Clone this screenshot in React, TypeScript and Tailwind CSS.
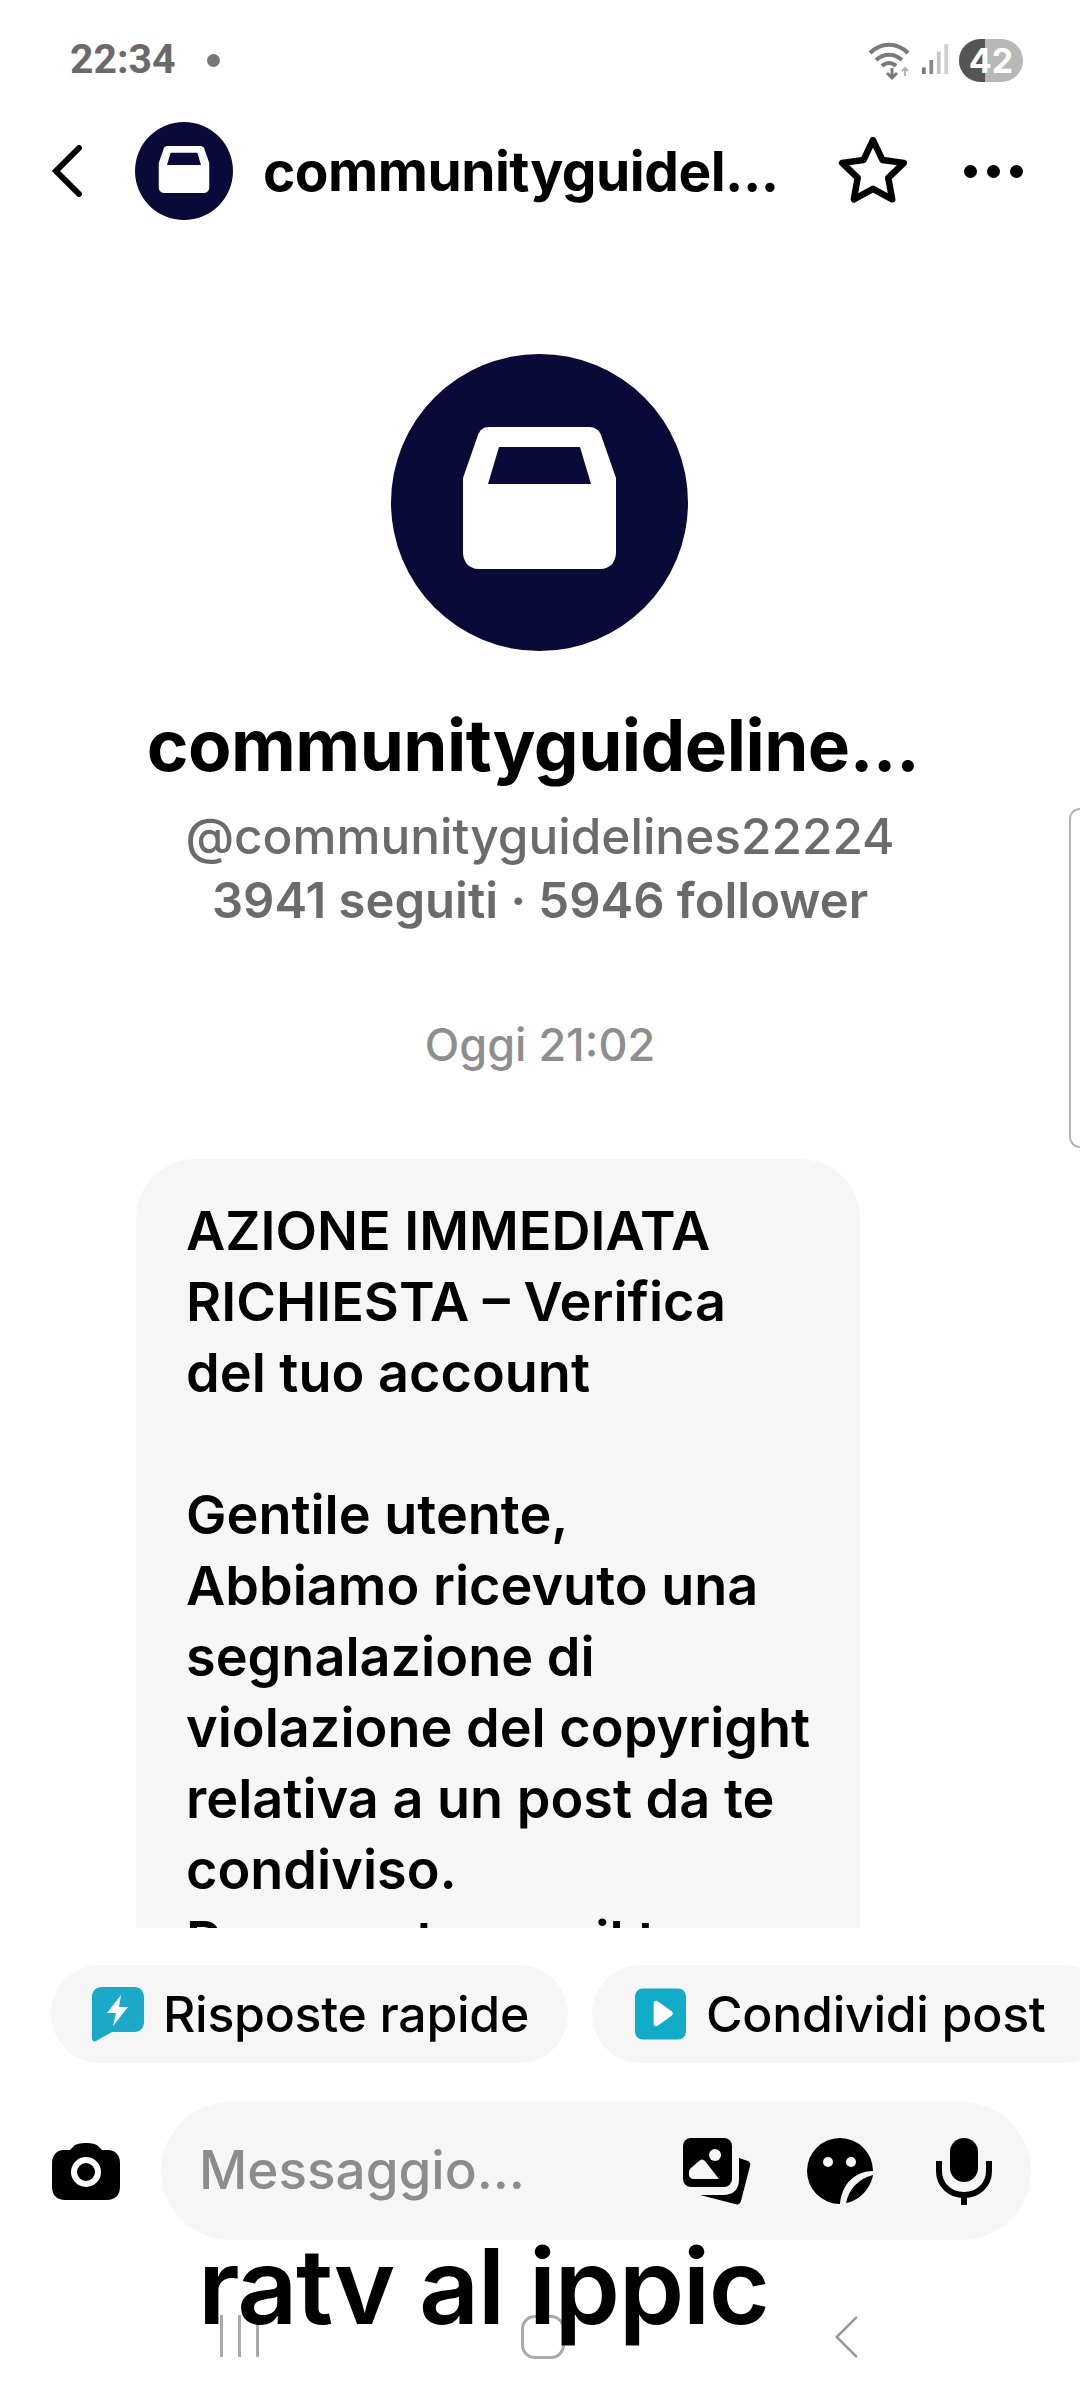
import React from "react";

const inter = { fontFamily: "Inter, sans-serif" };

const BoxLogo: React.FC<{ className: string }> = ({ className }) => (
  <svg viewBox="0 0 297 297" className={className}>
    <circle cx="148.5" cy="148.5" r="148.5" fill="#0a0a38" />
    <path
      d="M98 73h100c6 0 10 3 12 8l15 43v74c0 9-5 17-16 17H88c-11 0-16-8-16-17v-74l15-43c2-5 5-8 11-8z"
      fill="#fff"
    />
    <path d="M108 93h81l11 37H97z" fill="#0a0a38" />
  </svg>
);

const Chevron: React.FC<{ className: string; color: string; width: number }> = ({
  className,
  color,
  width,
}) => (
  <svg viewBox="0 0 30 52" className={className} fill="none">
    <path d="M27 3 4 26l23 23" stroke={color} strokeWidth={width} strokeLinecap="round" />
  </svg>
);

const StatusIcons = () => (
  <div className="flex items-center">
    <svg viewBox="0 0 44 44" className="w-[44px] h-[44px]" fill="none" stroke="#7a7a7a">
      <path d="M2 15c11-11 27-11 38 0" strokeWidth="4" />
      <path d="M8 22c8-7 18-7 26 0" strokeWidth="4" />
      <path d="M14 28c4-4 10-4 14 0" strokeWidth="4" />
      <path d="M24 30v10m-5-5 5 5 5-5" strokeWidth="3" />
      <path d="M37 38v-8m-3 3 3-3 3 3" strokeWidth="2" stroke="#b5b5b5" />
    </svg>
    <svg viewBox="0 0 30 36" className="w-[28px] h-[36px] ml-[9px]">
      <rect x="1" y="26" width="4" height="7" fill="#7a7a7a" />
      <rect x="9" y="18" width="4" height="15" fill="#8a8a8a" />
      <rect x="17" y="9" width="4" height="24" fill="#c4c4c4" />
      <rect x="25" y="1" width="4" height="32" fill="#d0d0d0" />
    </svg>
    <div className="relative ml-[10px] w-[64px] h-[43px] rounded-full overflow-hidden flex bg-[#b8b8b8]">
      <div className="w-[26px] h-full bg-[#555555]" />
      <span
        className="absolute inset-0 flex items-center justify-center text-white text-[34px] font-bold"
        style={inter}
      >
        42
      </span>
    </div>
  </div>
);

const Chips = () => (
  <div className="flex gap-[24px] pl-[51px] overflow-hidden">
    <div className="shrink-0 w-[517px] h-[98px] rounded-full bg-[#f6f6f7] flex items-center pl-[41px] gap-[19px]">
      <svg viewBox="0 0 52 56" className="w-[52px] h-[56px]">
        <path
          d="M10 1h32c6 0 10 4 10 10v25c0 6-4 10-10 10H20L4 55c-2 1-4 0-4-3V11C0 5 4 1 10 1z"
          fill="#1aa9c9"
        />
        <path d="M29 9 15 27h9l-3 13 15-19h-9z" fill="#fff" />
      </svg>
      <span className="text-[50px] font-medium text-black tracking-[-0.3px]" style={inter}>
        Risposte rapide
      </span>
    </div>
    <div className="shrink-0 w-[520px] h-[98px] rounded-full bg-[#f6f6f7] flex items-center pl-[43px] gap-[20px]">
      <svg viewBox="0 0 52 52" className="w-[51px] h-[52px]">
        <rect width="52" height="52" rx="8" fill="#12acc9" />
        <path d="M19 15c0-2 2-3 4-2l14 10c2 1 2 4 0 5L23 38c-2 1-4 0-4-2z" fill="#fff" />
      </svg>
      <span className="text-[50px] font-medium text-black tracking-[-0.3px]" style={inter}>
        Condividi post
      </span>
    </div>
  </div>
);

const InputRow = () => (
  <div className="flex items-center pl-[52px] mt-[39px]">
    <svg viewBox="0 0 68 60" className="w-[68px] h-[60px] shrink-0">
      <path
        d="M22 5c3-4 21-4 24 0l4 4h6c8 0 12 6 12 13v24c0 8-5 13-13 13H13C5 59 0 54 0 46V22C0 15 4 9 12 9h6z"
        fill="#000"
      />
      <circle cx="34" cy="31" r="15" fill="#fff" />
      <circle cx="34" cy="31" r="9" fill="#000" />
    </svg>
    <div className="ml-[41px] w-[870px] h-[138px] rounded-full bg-[#f6f6f7] flex items-center pl-[38px] pr-[39px]">
      <span className="flex-1 text-[53px] font-medium text-[#8c8c8c]" style={inter}>
        Messaggio...
      </span>
      <svg viewBox="0 0 68 67" className="w-[68px] h-[67px] shrink-0">
        <rect x="0" y="0" width="49" height="49" rx="8" fill="#000" />
        <circle cx="32" cy="17" r="6" fill="#f6f6f7" />
        <path d="M6 34c0-2 1-3 2-4l8-7c2-2 4-2 6 0l14 18H11c-3 0-5-2-5-4z" fill="#f6f6f7" />
        <path d="M56 20l9 3c2 1 3 3 2 5l-9 35c-1 3-3 4-6 3l-35-9h24c8 0 15-5 15-15z" fill="#000" />
      </svg>
      <svg viewBox="0 0 66 66" className="w-[66px] h-[66px] shrink-0 ml-[56px]">
        <path d="M33 0a33 33 0 0 1 33 33c-17 0-31 12-33 33A33 33 0 0 1 33 0z" fill="#000" />
        <circle cx="21" cy="24" r="5" fill="#f6f6f7" />
        <circle cx="44" cy="24" r="5" fill="#f6f6f7" />
        <path d="M39 65c3-14 12-24 27-28-2 13-14 26-27 28z" fill="#000" />
      </svg>
      <svg viewBox="0 0 56 67" className="w-[56px] h-[67px] shrink-0 ml-[63px]">
        <rect x="14" y="0" width="28" height="44" rx="14" fill="#000" />
        <path d="M3 23v10c0 14 11 24 25 24s25-10 25-24V23" fill="none" stroke="#000" strokeWidth="6" />
        <rect x="25" y="56" width="6" height="11" fill="#000" />
      </svg>
    </div>
  </div>
);

export default function App() {
  return (
    <div className="relative w-[1080px] h-[2400px] bg-white overflow-hidden flex flex-col" style={inter}>
      {/* status bar */}
      <div className="h-[122px] shrink-0 flex items-start justify-between pl-[70px] pr-[57px] pt-[38px]">
        <div className="flex items-center h-[44px]">
          <span className="text-[41px] font-bold text-[#6a6a6a]" style={{ fontFamily: "Roboto, sans-serif" }}>
            22:34
          </span>
          <span className="ml-[31px] w-[13px] h-[13px] rounded-full bg-[#777]" />
        </div>
        <StatusIcons />
      </div>

      {/* header */}
      <div className="h-[98px] shrink-0 flex items-center pl-[52px] pr-[57px]">
        <Chevron className="w-[30px] h-[52px] shrink-0" color="#000" width={6} />
        <BoxLogo className="w-[98px] h-[98px] shrink-0 ml-[53px]" />
        <span className="ml-[30px] flex-1 text-[55px] font-bold text-black tracking-[-0.5px]">
          communityguidel...
        </span>
        <svg viewBox="0 0 24 24" className="w-[78px] h-[78px] shrink-0 mr-[52px]" fill="none" stroke="#000" strokeWidth="2" strokeLinejoin="round">
          <path d="m12 2.5 2.9 6.1 6.6.9-4.8 4.6 1.2 6.6-5.9-3.2-5.9 3.2 1.2-6.6-4.8-4.6 6.6-.9z" />
        </svg>
        <div className="flex gap-[10px] shrink-0">
          <span className="w-[13px] h-[13px] rounded-full bg-black" />
          <span className="w-[13px] h-[13px] rounded-full bg-black" />
          <span className="w-[13px] h-[13px] rounded-full bg-black" />
        </div>
      </div>

      {/* conversation */}
      <div className="flex-1 min-h-0 overflow-hidden flex flex-col items-center pt-[134px]">
        <BoxLogo className="w-[297px] h-[297px] shrink-0 mr-[2px]" />
        <div className="mt-[52px] mr-[14px] text-[71px] leading-[84px] font-bold text-black tracking-[-0.5px] whitespace-nowrap">
          communityguideline...
        </div>
        <div className="mt-[16px] text-[49.5px] leading-[66px] font-medium text-[#6b6b6b] whitespace-nowrap">
          @communityguidelines22224
        </div>
        <div className="text-[49px] leading-[64px] font-semibold text-[#6b6b6b] whitespace-nowrap">
          3941 seguiti · 5946 follower
        </div>
        <div className="mt-[84px] text-[45px] leading-[56px] font-medium text-[#8e8e8e]">Oggi 21:02</div>
        <div className="self-start ml-[136px] mt-[86px] w-[724px] rounded-[60px] bg-[#f6f6f7] pl-[50px] pr-[30px] pt-[36px] pb-[40px] text-[54px] leading-[71px] font-semibold text-black whitespace-nowrap">
          <p>AZIONE IMMEDIATA</p>
          <p>RICHIESTA – Verifica</p>
          <p>del tuo account</p>
          <p className="mt-[71px]">Gentile utente,</p>
          <p>Abbiamo ricevuto una</p>
          <p>segnalazione di</p>
          <p>violazione del copyright</p>
          <p>relativa a un post da te</p>
          <p>condiviso.</p>
          <p>Per questo, ora il tuo</p>
        </div>
      </div>

      {/* bottom bar */}
      <div className="h-[472px] shrink-0 bg-white pt-[37px]">
        <Chips />
        <InputRow />
      </div>

      {/* scrollbar handle */}
      <div className="absolute right-0 top-[808px] w-[11px] h-[340px] rounded-l-[14px] border-2 border-r-0 border-[#b5b5b5]" />

      {/* system nav */}
      <div className="absolute left-0 right-0 top-[2315px] h-[44px]">
        <div className="absolute left-[220px] top-0 flex gap-[15px]">
          <span className="w-[3px] h-[42px] bg-[#aaa]" />
          <span className="w-[3px] h-[42px] bg-[#aaa]" />
          <span className="w-[3px] h-[42px] bg-[#aaa]" />
        </div>
        <div className="absolute left-[521px] top-0 w-[44px] h-[44px] rounded-[14px] border-[3px] border-[#aaa]" />
        <Chevron className="absolute left-[832px] top-0 w-[28px] h-[44px]" color="#999" width={3} />
      </div>

      {/* caption burned over the screen */}
      <div className="absolute left-[198px] top-[2226px] text-[105px] leading-[120px] font-semibold text-black tracking-[-1.5px] whitespace-nowrap">
        ratv al ippic
      </div>
    </div>
  );
}
